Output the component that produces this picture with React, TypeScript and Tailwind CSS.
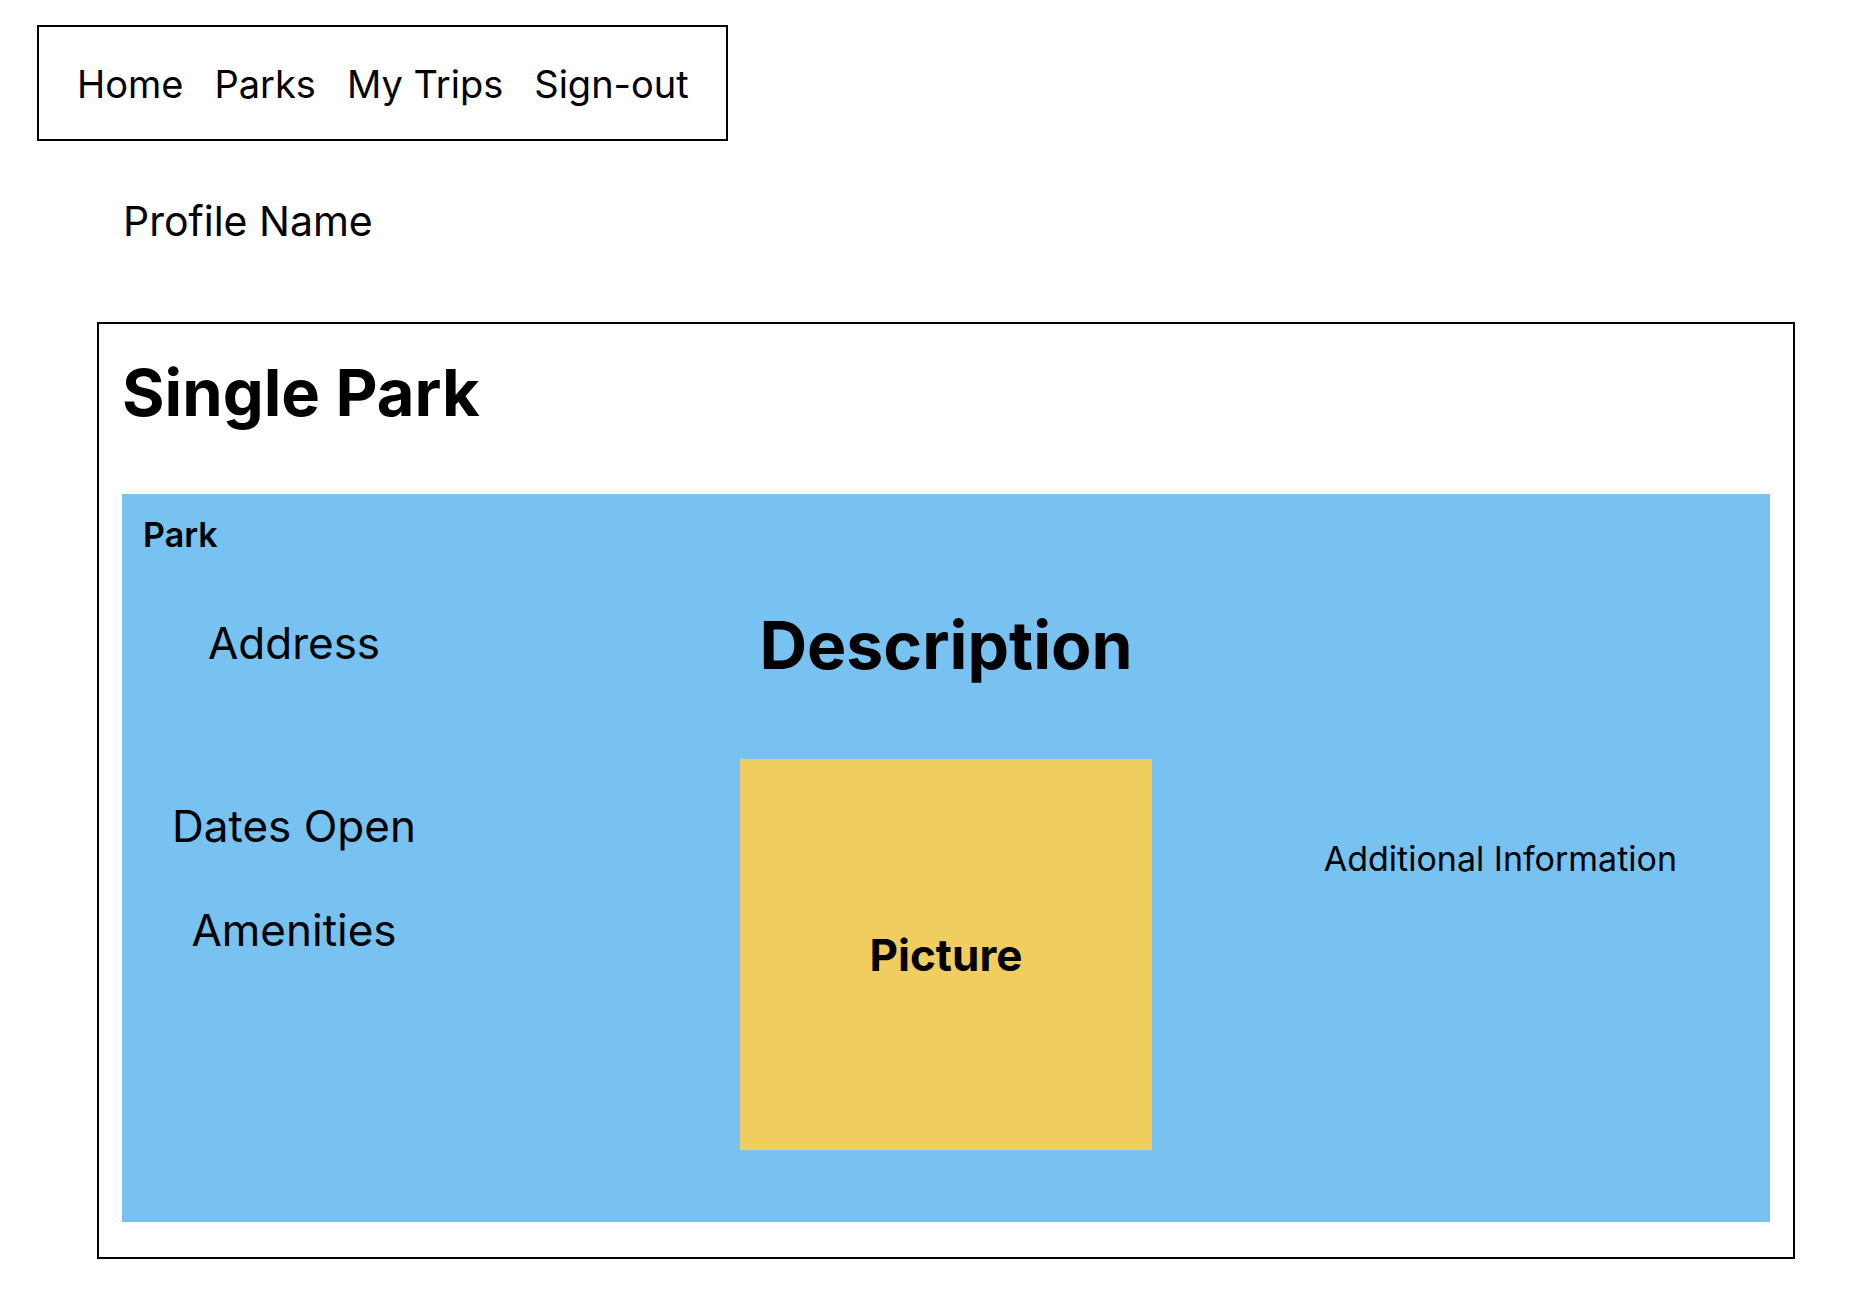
import React from "react";

export default function App() {
  return (
    <div className="min-h-[1296px] w-[1858px] bg-white text-black" style={{ fontFamily: "Inter, 'Noto Sans', sans-serif" }}>
      <div className="pt-[25px] pl-[37px]">
        <nav className="flex h-[116px] w-[691px] items-center gap-[31px] border-2 border-black pl-[38px] pt-[2px] text-[38px] leading-none">
          <span>Home</span>
          <span>Parks</span>
          <span>My Trips</span>
          <span>Sign-out</span>
        </nav>
      </div>
      <div className="mt-[60px] pl-[123px] text-[41px] leading-none">Profile Name</div>
      <div className="ml-[97px] mt-[80px] h-[937px] w-[1698px] border-2 border-black px-[23px] pt-[36px]">
        <h1 className="text-[65px] font-bold leading-none">Single Park</h1>
        <div className="mt-[69px] h-[728px] w-[1648px] bg-[#77c2f0] pt-[24px]">
          <div className="pl-[21px] text-[34px] font-semibold leading-none">Park</div>
          <div className="mt-[60px] flex">
            <div className="flex w-[344px] flex-col items-center text-[44px] leading-none">
              <div className="mt-[9px]">Address</div>
              <div className="mt-[139px]">Dates Open</div>
              <div className="mt-[60px]">Amenities</div>
            </div>
            <div className="ml-[274px] flex w-[412px] flex-col items-center">
              <div className="text-[66px] font-bold leading-none">Description</div>
              <div className="mt-[81px] flex h-[391px] w-[412px] items-center justify-center bg-[#efcd5f] text-[44px] font-bold leading-none">
                Picture
              </div>
            </div>
            <div className="ml-auto flex pr-[93px] pt-[230px] text-[34px] leading-none whitespace-nowrap">
              Additional Information
            </div>
          </div>
        </div>
      </div>
    </div>
  );
}
